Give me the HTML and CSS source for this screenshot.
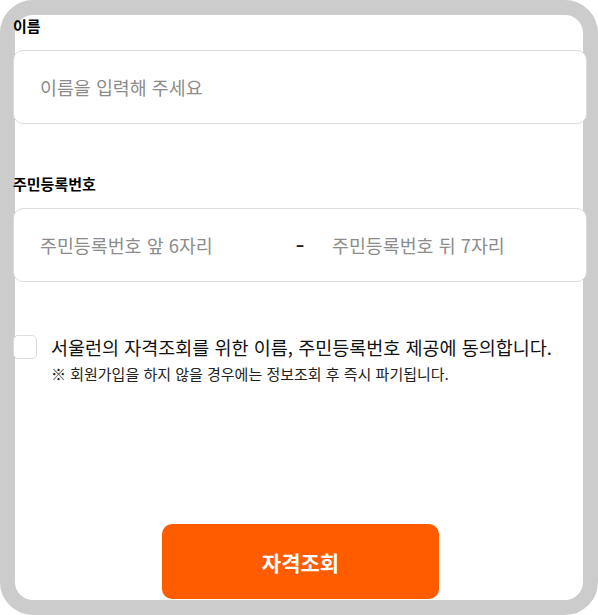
FILE: index.html
```html
<!DOCTYPE html>
<html lang="ko">
<head>
<meta charset="utf-8">
<title>자격조회</title>
<link rel="stylesheet" href="styles.css">
</head>
<body>
<div class="frame">
  <form class="form">
    <div class="field">
      <label class="label" for="name">이름</label>
      <div class="box">
        <input class="text-input" id="name" type="text" placeholder="이름을 입력해 주세요">
      </div>
    </div>
    <div class="field field-rrn">
      <label class="label" for="rrn1">주민등록번호</label>
      <div class="box box-split">
        <input class="text-input half" id="rrn1" type="text" placeholder="주민등록번호 앞 6자리">
        <span class="dash">-</span>
        <input class="text-input half" id="rrn2" type="password" placeholder="주민등록번호 뒤 7자리">
      </div>
    </div>
    <div class="agree">
      <input class="check" type="checkbox" id="agree">
      <div class="agree-text">
        <label class="agree-main" for="agree">서울런의 자격조회를 위한 이름, 주민등록번호 제공에 동의합니다.</label>
        <p class="agree-note">※ 회원가입을 하지 않을 경우에는 정보조회 후 즉시 파기됩니다.</p>
      </div>
    </div>
    <div class="actions">
      <button class="submit" type="button">자격조회</button>
    </div>
  </form>
</div>
</body>
</html>
```
FILE: styles.css
```css
* { box-sizing: border-box; }
html, body {
  margin: 0;
  padding: 0;
  background: #fff;
}
body {
  font-family: "Noto Sans CJK KR", "Noto Sans", sans-serif;
  color: #111;
}
.frame {
  width: 598px;
  height: 615px;
  border: 15px solid #cccccc;
  border-radius: 33px;
  background: #fff;
}
.form {
  margin: 0 -4px 0 -2px;
  padding-top: 1px;
}
.field-rrn { margin-top: 50px; }
.label {
  display: block;
  font-size: 15px;
  font-weight: 700;
  line-height: 20px;
  color: #000;
}
.box {
  margin-top: 14px;
  height: 74px;
  border: 1px solid #dcdcdc;
  border-radius: 10px;
  display: flex;
  align-items: center;
  background: #fff;
}
.text-input {
  flex: 1;
  min-width: 0;
  height: 100%;
  border: 0;
  outline: 0;
  background: transparent;
  padding: 0 0 0 26px;
  font-family: inherit;
  font-size: 18.4px;
  color: #333;
}
.text-input::placeholder { color: #8c8c8c; }
.dash {
  width: 12px;
  text-align: center;
  font-size: 26px;
  line-height: 1;
  color: #222;
}
.agree {
  margin-top: 53px;
  display: flex;
  align-items: flex-start;
  gap: 14px;
}
.check {
  appearance: none;
  -webkit-appearance: none;
  margin: 0;
  width: 24px;
  height: 24px;
  border: 1px solid #dcdcdc;
  border-radius: 5px;
  background: #fff;
  flex: none;
}
.agree-main {
  display: block;
  font-size: 18.5px;
  line-height: 24px;
  color: #111;
}
.agree-note {
  margin: 6px 0 0;
  font-size: 15px;
  line-height: 18px;
  color: #222;
}
.actions {
  display: flex;
  justify-content: center;
  margin-top: 141px;
  padding-left: 1px;
}
.submit {
  width: 277px;
  height: 75px;
  border: 0;
  border-radius: 10px;
  background: #ff5c00;
  color: #fff;
  font-family: inherit;
  font-size: 21px;
  font-weight: 700;
}
```
